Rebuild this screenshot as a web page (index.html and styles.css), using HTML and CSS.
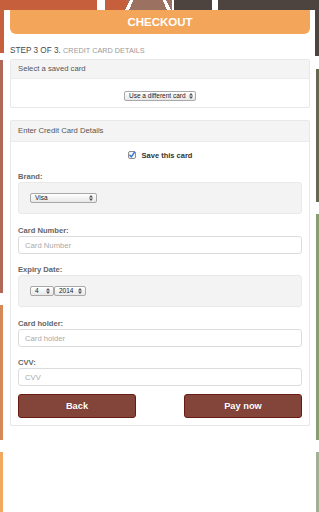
FILE: index.html
```html
<!DOCTYPE html>
<html lang="en">
<head>
<meta charset="utf-8">
<title>Checkout</title>
<link rel="stylesheet" href="styles.css">
</head>
<body>
<main class="card">
  <h1 class="title">CHECKOUT</h1>
  <p class="step"><span class="step-num">STEP 3 OF 3.</span> <span class="step-name">CREDIT CARD DETAILS</span></p>

  <section class="panel">
    <div class="panel-head">Select a saved card</div>
    <div class="saved-body">
      <span class="sel sel-saved"><span class="sel-text">Use a different card</span><svg class="arr" width="4" height="6" viewBox="0 0 4 6"><path d="M0 2.4 2 0 4 2.4Z M0 3.6 2 6 4 3.6Z" fill="#555"/></svg></span>
    </div>
  </section>

  <section class="panel">
    <div class="panel-head tall">Enter Credit Card Details</div>
    <div class="form">
      <div class="save">
        <svg class="chk" width="8" height="8" viewBox="0 0 8 8"><rect x="0.5" y="0.5" width="7" height="7" rx="1.5" fill="#f6f6f6" stroke="#8e8e8e"/><path d="M1.8 4.2 3.3 5.9 6.6 1.2" fill="none" stroke="#2f6fd0" stroke-width="1.4" stroke-linecap="round" stroke-linejoin="round"/></svg>
        <span>Save this card</span>
      </div>

      <div class="field">
        <div class="lbl">Brand:</div>
        <div class="well">
          <span class="sel sel-brand"><span class="sel-text">Visa</span><svg class="arr" width="4" height="6" viewBox="0 0 4 6"><path d="M0 2.4 2 0 4 2.4Z M0 3.6 2 6 4 3.6Z" fill="#555"/></svg></span>
        </div>
      </div>

      <div class="field">
        <div class="lbl">Card Number:</div>
        <input class="inp" type="text" placeholder="Card Number">
      </div>

      <div class="field">
        <div class="lbl">Expiry Date:</div>
        <div class="well">
          <span class="sel sel-month"><span class="sel-text">4</span><svg class="arr" width="4" height="6" viewBox="0 0 4 6"><path d="M0 2.4 2 0 4 2.4Z M0 3.6 2 6 4 3.6Z" fill="#555"/></svg></span>
          <span class="sel sel-year"><span class="sel-text">2014</span><svg class="arr" width="4" height="6" viewBox="0 0 4 6"><path d="M0 2.4 2 0 4 2.4Z M0 3.6 2 6 4 3.6Z" fill="#555"/></svg></span>
        </div>
      </div>

      <div class="field">
        <div class="lbl">Card holder:</div>
        <input class="inp" type="text" placeholder="Card holder">
      </div>

      <div class="field">
        <div class="lbl">CVV:</div>
        <input class="inp" type="text" placeholder="CVV">
      </div>

      <div class="actions">
        <button class="btn" type="button">Back</button>
        <button class="btn" type="button">Pay now</button>
      </div>
    </div>
  </section>
</main>
</body>
</html>
```

FILE: styles.css
```css
html, body {
  margin: 0;
  padding: 0;
}

body {
  min-height: 512px;
  font-family: "Liberation Sans", Arial, sans-serif;
  background-color: #fff;
  background-repeat: no-repeat;
  background-image:
    linear-gradient(115deg, transparent 0 42%, #fff 42% 62%, transparent 62%),
    linear-gradient(65deg, transparent 0 38%, #fff 38% 58%, transparent 58%),
    linear-gradient(#c6603c, #c6603c),
    linear-gradient(#c6603c, #c6603c),
    linear-gradient(#9b7262, #9b7262),
    linear-gradient(#4d4440, #4d4440),
    linear-gradient(#4d4440, #4d4440),
    linear-gradient(#b06858, #b06858),
    linear-gradient(#d58858, #d58858),
    linear-gradient(#f2a85e, #f2a85e),
    linear-gradient(#67664f, #67664f),
    linear-gradient(#8a9c72, #8a9c72),
    linear-gradient(#a3b096, #a3b096);
  background-position:
    122px 0,
    160px 0,
    0 0,
    105px 0,
    126px 0,
    174px 0,
    218px 0,
    0 60px,
    0 305px,
    0 452px,
    316px 69px,
    316px 214px,
    316px 452px;
  background-size:
    14px 10px,
    14px 10px,
    97px 53px,
    22px 10px,
    46px 10px,
    38px 10px,
    101px 56px,
    3px 233px,
    3px 135px,
    3px 60px,
    3px 133px,
    3px 226px,
    3px 60px;
}

.card {
  box-sizing: border-box;
  min-height: 502px;
  margin: 10px 4px 0 4px;
  padding: 0 5px 0 6px;
  background: #fff;
}

.title {
  margin: 0;
  height: 24px;
  line-height: 25px;
  background: #f3a55a;
  border-radius: 0 0 6px 6px;
  color: #fff;
  font-size: 11.5px;
  font-weight: 700;
  text-align: center;
}

.step {
  margin: 12px 0 3px;
  line-height: 10px;
  font-size: 8.2px;
  color: #4a4a4a;
}

.step-name {
  font-size: 7.3px;
  color: #9a9a9a;
}

.panel {
  border: 1px solid #e8e8e8;
  border-radius: 2px;
  background: #fff;
}

.panel + .panel {
  margin-top: 12px;
}

.panel-head {
  padding: 0 7px;
  line-height: 18px;
  background: #f4f4f4;
  border-bottom: 1px solid #ebebeb;
  font-size: 7.7px;
  color: #555;
}

.panel-head.tall {
  line-height: 20px;
}

.saved-body {
  display: flex;
  justify-content: center;
  padding: 12px 0 6px;
}

.sel {
  box-sizing: border-box;
  display: flex;
  flex: none;
  align-items: center;
  justify-content: space-between;
  height: 10px;
  padding: 0 3px 0 4px;
  border: 1px solid #a8a8a8;
  border-radius: 2px;
  background: linear-gradient(#ffffff, #e8e8e8);
  font-size: 6.5px;
  color: #222;
  line-height: 1;
}

.sel-text {
  white-space: nowrap;
}

.arr {
  flex: none;
  margin-left: 3px;
}

.sel-saved { width: 72px; }
.sel-brand { width: 67px; }
.sel-month { width: 24px; }
.sel-year { width: 32px; }

.form {
  display: flex;
  flex-direction: column;
  padding: 0 7px 7px;
}

.save {
  display: flex;
  justify-content: center;
  align-items: center;
  gap: 6px;
  height: 10px;
  margin-top: 8px;
  font-size: 7.5px;
  font-weight: 700;
  color: #333;
}

.chk {
  flex: none;
}

.field {
  display: flex;
  flex-direction: column;
  margin-top: 11px;
}

.save + .field {
  margin-top: 12px;
}

.lbl {
  line-height: 10px;
  font-size: 7.6px;
  font-weight: 700;
  color: #666;
}

.well {
  box-sizing: border-box;
  display: flex;
  margin-bottom: 1px;
  padding: 10px 11px;
  background: #f3f3f3;
  border: 1px solid #e9e9e9;
  border-radius: 3px;
}

.inp {
  display: block;
  box-sizing: border-box;
  width: 100%;
  height: 18px;
  margin: 0;
  padding: 0 6px;
  border: 1px solid #dcdcdc;
  border-radius: 3px;
  background: #fff;
  font-family: "Liberation Sans", Arial, sans-serif;
  font-size: 7.7px;
  color: #333;
  outline: none;
}

.inp::placeholder {
  color: #aaa;
}

.actions {
  display: flex;
  justify-content: space-between;
  margin-top: 8px;
}

.btn {
  width: 118px;
  height: 24px;
  margin: 0;
  padding: 0;
  background: #83443a;
  border: 1px solid #6a1c13;
  border-radius: 3px;
  color: #fff;
  font-family: "Liberation Sans", Arial, sans-serif;
  font-size: 9.3px;
  font-weight: 700;
  text-shadow: 0 0 1px rgba(0, 0, 0, 0.2);
}
```
